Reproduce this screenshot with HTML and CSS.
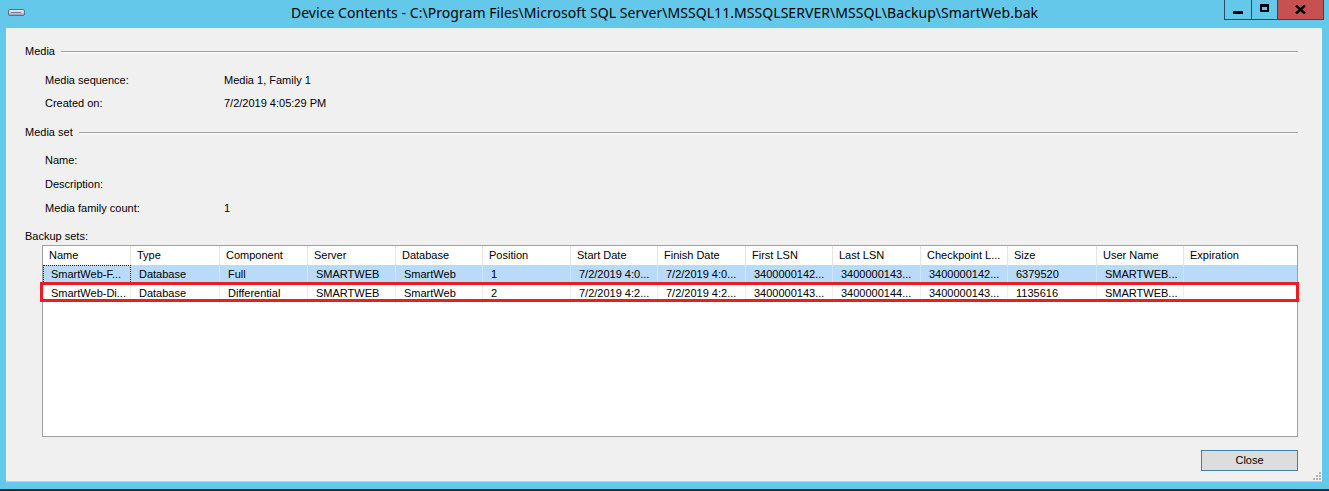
FILE: index.html
```html
<!DOCTYPE html>
<html>
<head>
<meta charset="utf-8">
<title>Device Contents</title>
<link rel="stylesheet" href="styles.css">
</head>
<body>
<div class="window">
  <div class="titlebar">
    <div class="tb-left">
      <svg class="app-icon" width="17" height="7" viewBox="0 0 17 7">
        <defs>
          <linearGradient id="ig" x1="0" y1="0" x2="0" y2="1">
            <stop offset="0" stop-color="#f4f6fa"/>
            <stop offset="0.5" stop-color="#c9d0dc"/>
            <stop offset="1" stop-color="#8f9bb0"/>
          </linearGradient>
        </defs>
        <rect x="0.5" y="0.5" width="16" height="6" rx="1.5" fill="url(#ig)" stroke="#5a6b8c"/>
        <rect x="3" y="3" width="10" height="1" fill="#6f7f9e"/>
      </svg>
    </div>
    <div class="title">Device Contents - C:\Program Files\Microsoft SQL Server\MSSQL11.MSSQLSERVER\MSSQL\Backup\SmartWeb.bak</div>
    <div class="tb-right">
      <div class="caption-buttons">
        <div class="cbtn cbtn-min"><span class="glyph-min"></span></div>
        <div class="cbtn cbtn-max"><span class="glyph-max"></span></div>
        <div class="cbtn cbtn-close">
          <svg width="11" height="9" viewBox="0 0 11 9"><path d="M1 0.5 L10 8.5 M10 0.5 L1 8.5" stroke="#000" stroke-width="2.4"/></svg>
        </div>
      </div>
    </div>
  </div>

  <div class="client">
    <div class="group-head"><span class="group-title">Media</span><span class="rule"></span></div>
    <div class="prop gap-13"><span class="k">Media sequence:</span><span class="v">Media 1, Family 1</span></div>
    <div class="prop gap-7"><span class="k">Created on:</span><span class="v">7/2/2019 4:05:29 PM</span></div>

    <div class="group-head gap-13"><span class="group-title">Media set</span><span class="rule"></span></div>
    <div class="prop gap-12"><span class="k">Name:</span><span class="v"></span></div>
    <div class="prop gap-8"><span class="k">Description:</span><span class="v"></span></div>
    <div class="prop gap-8"><span class="k">Media family count:</span><span class="v">1</span></div>

    <div class="grid-label">Backup sets:</div>
    <div class="listview">
      <div class="lv-row lv-head">
        <div class="c">Name</div><div class="c">Type</div><div class="c">Component</div><div class="c">Server</div><div class="c">Database</div><div class="c">Position</div><div class="c">Start Date</div><div class="c">Finish Date</div><div class="c">First LSN</div><div class="c">Last LSN</div><div class="c">Checkpoint L...</div><div class="c">Size</div><div class="c">User Name</div><div class="c">Expiration</div>
      </div>
      <div class="lv-row lv-sel">
        <div class="c focus">SmartWeb-F...</div><div class="c">Database</div><div class="c">Full</div><div class="c">SMARTWEB</div><div class="c">SmartWeb</div><div class="c">1</div><div class="c">7/2/2019 4:0...</div><div class="c">7/2/2019 4:0...</div><div class="c">3400000142...</div><div class="c">3400000143...</div><div class="c">3400000142...</div><div class="c">6379520</div><div class="c">SMARTWEB...</div><div class="c"></div>
      </div>
      <div class="lv-row lv-marked">
        <div class="c">SmartWeb-Di...</div><div class="c">Database</div><div class="c">Differential</div><div class="c">SMARTWEB</div><div class="c">SmartWeb</div><div class="c">2</div><div class="c">7/2/2019 4:2...</div><div class="c">7/2/2019 4:2...</div><div class="c">3400000143...</div><div class="c">3400000144...</div><div class="c">3400000143...</div><div class="c">1135616</div><div class="c">SMARTWEB...</div><div class="c"></div>
      </div>
    </div>

    <div class="footer"><button class="close-btn">Close</button></div>

    <svg class="grip" width="9" height="9" viewBox="0 0 9 9">
      <g fill="#b4b4b4">
        <rect x="7" y="1" width="2" height="2"/>
        <rect x="4" y="4" width="2" height="2"/><rect x="7" y="4" width="2" height="2"/>
        <rect x="1" y="7" width="2" height="2"/><rect x="4" y="7" width="2" height="2"/><rect x="7" y="7" width="2" height="2"/>
      </g>
    </svg>
  </div>
</div>
</body>
</html>
```

FILE: styles.css
```css
* { box-sizing: border-box; }

html, body {
  margin: 0;
  padding: 0;
}

body {
  width: 1329px;
  height: 491px;
  overflow: hidden;
  background: #2b2b2b;
  font-family: "Liberation Sans", Arial, sans-serif;
  font-size: 11px;
  color: #000;
}

.window {
  height: 489px;
  background: #64c8ea;
  display: flex;
  flex-direction: column;
}

/* ---------- title bar ---------- */
.titlebar {
  height: 28px;
  flex: none;
  display: grid;
  grid-template-columns: 1fr auto 1fr;
}

.tb-left {
  display: flex;
  align-items: flex-start;
  padding: 9px 0 0 8px;
}

.app-icon { display: block; }

.title {
  font-family: "Noto Sans", "Open Sans", sans-serif;
  font-size: 14px;
  letter-spacing: 0.05px;
  line-height: 20px;
  padding-top: 3px;
  color: #000;
  white-space: nowrap;
}

.tb-right {
  display: flex;
  justify-content: flex-end;
  align-items: flex-start;
  padding-right: 5px;
}

.caption-buttons {
  display: flex;
  height: 20px;
  border-left: 1px solid #2f4b57;
  border-bottom: 1px solid #2f4b57;
}

.cbtn {
  height: 19px;
  display: flex;
  align-items: center;
  justify-content: center;
  border-right: 1px solid #2f4b57;
}

.cbtn-min { width: 27px; }
.cbtn-max { width: 26px; }
.cbtn-close {
  width: 46px;
  background: #c75050;
  border-right: 1px solid #6e3434;
}

.glyph-min {
  display: block;
  width: 10px;
  height: 3px;
  background: #000;
  margin-top: 6px;
}

.glyph-max {
  display: block;
  width: 9px;
  height: 8px;
  border: 2px solid #000;
  border-top-width: 3px;
  margin-top: -3px;
}

.cbtn-close svg { display: block; margin-top: -1px; }

/* ---------- client area ---------- */
.client {
  position: relative;
  flex: 1;
  margin: 0 7px 7px 6px;
  background: #f0f0f0;
  border-left: 1px solid #f6f6f6;
  border-bottom: 1px solid #c8d0d4;
  padding: 15px 24px 0 18px;
  display: flex;
  flex-direction: column;
}

.group-head {
  display: flex;
  align-items: center;
  height: 16px;
  line-height: 16px;
}

.group-title { padding-right: 6px; }

.rule {
  flex: 1;
  height: 1px;
  background: #a0a0a0;
  box-shadow: 0 1px 0 #ffffff;
}

.prop {
  display: flex;
  height: 16px;
  line-height: 16px;
  padding-left: 20px;
}

.prop .k { width: 179px; flex: none; }

.gap-7 { margin-top: 7px; }
.gap-8 { margin-top: 8px; }
.gap-12 { margin-top: 12px; }
.gap-13 { margin-top: 13px; }

.grid-label {
  height: 16px;
  line-height: 16px;
  margin-top: 12px;
}

/* ---------- list view ---------- */
.listview {
  margin-top: 1px;
  margin-left: 17px;
  height: 192px;
  background: #fff;
  border: 1px solid #a0a0a0;
  display: flex;
  flex-direction: column;
}

.lv-row {
  position: relative;
  display: grid;
  grid-template-columns: 88px 89px 88px 88px 87px 88px 87px 88px 87px 88px 87px 89px 87px 1fr;
  height: 19px;
  line-height: 19px;
  flex: none;
}

.lv-row .c {
  white-space: nowrap;
  overflow: hidden;
  padding-left: 8px;
  border-right: 1px solid #f0f0f0;
}

.lv-row .c:last-child { border-right: none; }

.lv-head {
  height: 19px;
  line-height: 18px;
}

.lv-head .c {
  padding-left: 6px;
  border-right: 1px solid #e5e5e5;
}

.lv-head .c:last-child { border-right: none; }

.lv-sel { background: #b9dbfa; }
.lv-sel .c { border-right-color: #cfe6fc; }

.lv-sel .focus {
  outline: 1px dotted #222;
  outline-offset: -1px;
}

.lv-marked::after {
  content: "";
  position: absolute;
  top: -2px;
  bottom: 1px;
  left: -3px;
  right: -2px;
  border: 3px solid #ed1c24;
  pointer-events: none;
}

/* ---------- footer ---------- */
.footer {
  display: flex;
  justify-content: flex-end;
  margin-top: 13px;
}

.close-btn {
  width: 97px;
  height: 21px;
  padding: 0;
  background: #dddddd;
  border: 1px solid #3c7fb1;
  border-radius: 0;
  font-family: "Liberation Sans", Arial, sans-serif;
  font-size: 11px;
  color: #000;
  line-height: 19px;
}

.grip {
  position: absolute;
  right: 1px;
  bottom: 1px;
}
```
